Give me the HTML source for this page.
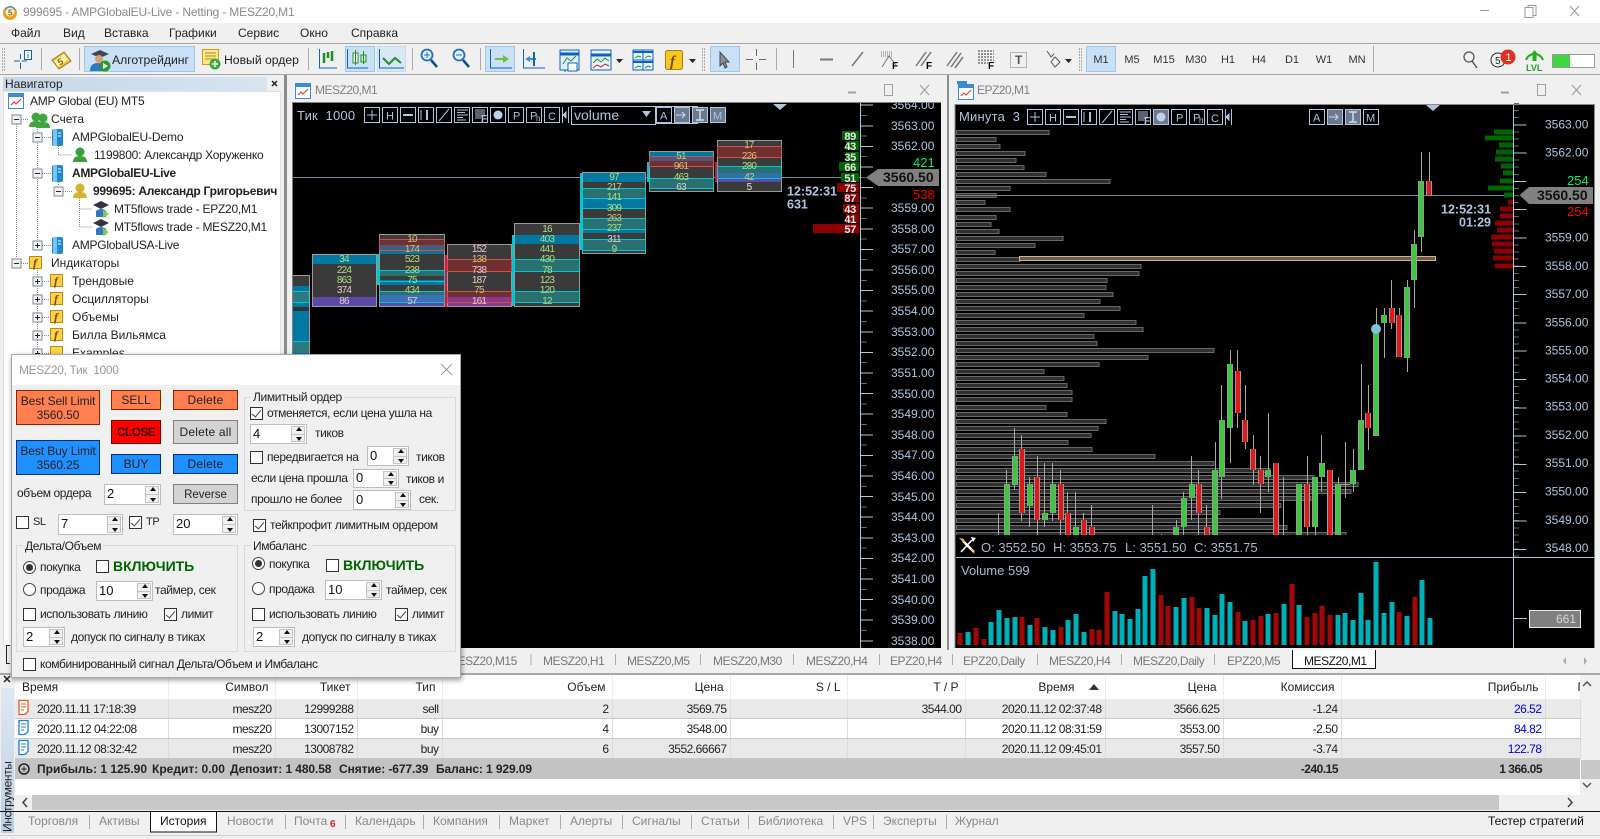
<!DOCTYPE html>
<html lang="ru"><head><meta charset="utf-8"><title>999695 - AMPGlobalEU-Live - Netting - MESZ20,M1</title>
<style>
html,body{margin:0;padding:0;width:1600px;height:839px;overflow:hidden;background:#f0f0f0;font:12px/16px "Liberation Sans","Noto Sans CJK SC",sans-serif;color:#222}
.a{position:absolute;white-space:nowrap}
.r{position:absolute}
#svg{position:absolute;left:0;top:0}
svg text{font-family:"Liberation Sans","Noto Sans CJK SC",sans-serif}
.tf{position:absolute;top:52px;width:30px;text-align:center;font-size:11px;color:#333}
.ct{color:#777;letter-spacing:-.45px}
.bt{color:#888}
.ls{letter-spacing:-.25px}
table{position:absolute;left:15px;top:675px;width:1565px;border-collapse:collapse;table-layout:fixed;background:#fff}
th,td{padding:0 3px 0 0;text-align:right;white-space:nowrap;overflow:hidden;font-weight:normal;border-right:1px solid #dcdcdc}
th{height:24px;padding-right:6px;border-right:1px solid #eee}
td{height:19px;border-bottom:1px solid #c8c8c8;letter-spacing:-.5px;line-height:14px}
tr.g td{background:#e9e9e9}
tr.s td{background:#c3c3c3;font-weight:bold;height:20px;border:0;font-size:12px}
.bl{color:#0000e0}
#dlg{position:absolute;left:11px;top:354px;width:450px;height:324px;background:#f0f0f0;border:1px solid #a8a8a8;box-sizing:border-box;box-shadow:1px 2px 5px rgba(0,0,0,.4)}
.w{position:absolute;left:0;top:0}
.w .a{letter-spacing:-.4px}
.b{position:absolute;box-sizing:border-box;display:flex;align-items:center;justify-content:center;text-align:center;line-height:14px;color:#222}
.sp{position:absolute;box-sizing:border-box;background:#fff;border:1px solid #bdbdbd;padding-left:2px;font-size:13px;line-height:17px;color:#111}
.sp:before{content:"";position:absolute;right:1px;top:1px;bottom:1px;width:12px;border:1px solid #c4c4c4;background:linear-gradient(#c4c4c4,#c4c4c4) 0 50%/100% 1px no-repeat #f0f0f0}
.sp i{position:absolute;right:4px;width:0;height:0;border:3px solid transparent}
.sp i.u{top:2px;border-bottom:4px solid #111;border-top:0}
.sp i.d{bottom:2px;border-top:4px solid #111;border-bottom:0}
.cb{position:absolute;box-sizing:border-box;width:13px;height:13px;background:#fff;border:1px solid #333}
.cb.c:after{content:"";position:absolute;left:3px;top:0;width:4px;height:8px;border:solid #444;border-width:0 1.5px 1.5px 0;transform:rotate(40deg)}
.ra{position:absolute;box-sizing:border-box;width:13px;height:13px;background:#fff;border:1px solid #444;border-radius:50%}
.ra.c:after{content:"";position:absolute;left:2px;top:2px;width:7px;height:7px;border-radius:50%;background:#333}
.g1{position:absolute;box-sizing:border-box;border:1px solid #dadada}
.lg{position:absolute;background:#f0f0f0;padding:0 2px;white-space:nowrap;letter-spacing:-.35px}
.vk{position:absolute;font-weight:bold;font-size:14px;color:#006400;white-space:nowrap;line-height:16px}
</style></head><body>

<!-- backgrounds -->
<div class="r" style="left:0;top:0;width:1600px;height:23px;background:#fff"></div>
<div class="r" style="left:0;top:43px;width:1600px;height:1px;background:#a6a6a6"></div>
<div class="r" style="left:0;top:74px;width:1600px;height:1px;background:#a6a6a6"></div>
<div class="r" style="left:84px;top:46px;width:111px;height:26px;box-sizing:border-box;background:#c9e0f7;border:1px solid #9cc7ea"></div>
<div class="r" style="left:345px;top:46px;width:30px;height:26px;box-sizing:border-box;background:#c9e0f7;border:1px solid #9cc7ea"></div>
<div class="r" style="left:377px;top:46px;width:29px;height:26px;box-sizing:border-box;background:#d9e8f6;border:1px solid #c4dcf0"></div>
<div class="r" style="left:485px;top:46px;width:30px;height:26px;box-sizing:border-box;background:#c9e0f7;border:1px solid #9cc7ea"></div>
<div class="r" style="left:710px;top:46px;width:30px;height:26px;box-sizing:border-box;background:#c9e0f7;border:1px solid #9cc7ea"></div>
<div class="r" style="left:1086px;top:46px;width:30px;height:26px;box-sizing:border-box;background:#c9e0f7;border:1px solid #9cc7ea"></div>
<!-- navigator -->
<div class="r" style="left:3px;top:77px;width:264px;height:14px;background:linear-gradient(90deg,#c6d7e8,#d8e4f0)"></div>
<div class="r" style="left:3px;top:91px;width:278px;height:555px;background:#fff;border:1px solid #e2e2e2;box-sizing:border-box"></div>
<div class="r" style="left:284px;top:75px;width:3px;height:598px;background:#8c8c8c"></div>
<div class="r" style="left:947px;top:75px;width:2px;height:575px;background:#8c8c8c"></div>
<div class="r" style="left:0;top:673px;width:1600px;height:2px;background:#a8a8a8"></div>
<!-- toolbox -->
<div class="r" style="left:15px;top:675px;width:1585px;height:120px;background:#fff"></div>
<div class="r" style="left:1px;top:688px;width:13px;height:145px;background:linear-gradient(#dfe8f2,#bccfe2)"></div>
<div class="r" style="left:15px;top:795px;width:1565px;height:15px;background:#f0f0f0"></div>
<div class="r" style="left:32px;top:795px;width:1467px;height:15px;background:#c8c8c8"></div>
<div class="r" style="left:1580px;top:675px;width:20px;height:135px;background:#f0f0f0"></div>
<div class="r" style="left:1580px;top:760px;width:20px;height:19px;background:#c8c8c8"></div>
<div class="r" style="left:0;top:811px;width:1600px;height:1px;background:#111"></div>
<div class="r" style="left:0;top:835px;width:1600px;height:1px;background:#cfcfcf"></div>

<svg id="svg" width="1600" height="839" viewBox="0 0 1600 839" xmlns="http://www.w3.org/2000/svg">
<defs>
<g id="m"><rect x="-4.5" y="-4.5" width="9" height="9" fill="#f2f2f2" stroke="#7f8a99"/><path d="M-2.5 0h5" stroke="#223"/></g>
<g id="p"><rect x="-4.5" y="-4.5" width="9" height="9" fill="#f2f2f2" stroke="#7f8a99"/><path d="M-2.5 0h5M0-2.5v5" stroke="#223"/></g>
<g id="srv"><rect x="0" y="0" width="11" height="17" rx="2" fill="#1e88d8"/><rect x="1" y="0" width="4" height="17" fill="#7cc4f4"/><path d="M6 4h3M6 7h3" stroke="#fff"/></g>
<g id="fi"><rect x=".5" y=".5" width="12" height="12" fill="#ffd24a" stroke="#b98a10"/></g>
<g id="hat"><path d="M7 0l8 4-8 4-8-4z" fill="#334" transform="translate(1 0)"/><path d="M3 10q5-4 10 0v6H3z" fill="#2f78c8"/><path d="M10 9l6 4-6 4z" fill="#7fce4a"/></g>
<g id="man"><circle cx="7" cy="5" r="4.5"/><path d="M0 15q0-6 7-6t7 6z"/></g>
<g id="win"><rect x=".5" y=".5" width="15" height="15" fill="#fff" stroke="#3a8ad8"/><rect x="0" y="0" width="16" height="4" fill="#3a8ad8"/><path d="M3 12l3-3 2 2 5-5" fill="none" stroke="#d83020"/></g>
<g id="tb" fill="none" stroke="#b0c4de" shape-rendering="crispEdges">
<path d="M.5.5h15v15H.5zM18.5.5h15v15h-15zM36.5.5h15v15h-15zM54.5.5h15v15h-15zM72.5.5h15v15h-15zM90.5.5h15v15h-15zM108.5.5h15v15h-15zM126.5.5h15v15h-15zM144.5.5h15v15h-15zM162.5.5h15v15h-15zM180.5.5h15v15h-15z"/>
<path d="M8 3v10M3 8h10M39 8h10M57 3v10M93 3h11M93 5.5h8M93 8h11M93 10.5h6M93 13h9M111 3h10M111 5h10M111 7h10M111 9h10M111 11h6"/>
<path d="M39 7.5h10M39 8.5h10M62.500 3v10M63.500 3v10" stroke-width="1"/>
<path d="M75 14L85 2" shape-rendering="auto"/>
<path d="M198.500 0v16M204.500 0v16"/>
<path d="M202 5l-3 3 3 3z" fill="#b0c4de"/>
</g>
<clipPath id="cp"><rect x="955" y="105" width="558" height="430"/></clipPath>
<clipPath id="lc"><rect x="293" y="103" width="647" height="545"/></clipPath>
<path id="gb" d="M1007 484V535M1015 456V485M1030 484V506M1045 513V520M1053 484V513M1076 527V535M1176 527V535M1184 498V527M1192 484V498M1215 470V535M1222 420V477M1230 364V428M1268 470V477M1299 484V535M1315 477V527M1322 463V477M1338 484V535M1353 470V484M1361 420V470M1376 329V436M1384 315V323M1407 287V358M1414 244V280M1421 181V237"/>
<path id="rb" d="M1022 449V513M1037 477V520M1061 484V520M1068 513V535M1084 520V535M1092 527V535M1199 484V513M1207 527V535M1238 371V413M1245 420V442M1253 449V470M1261 470V484M1276 463V535M1307 484V527M1330 470V535M1368 413V428M1392 308V323M1399 315V357M1429 181V195"/>
</defs>

<!-- title -->
<circle cx="10" cy="13" r="7" fill="#e8a020"/><path d="M4 10q6-8 12 0" fill="#4a90d0"/><circle cx="10" cy="12" r="4.500" fill="#f4f0d0"/>
<text x="8" y="15.500" font-size="8" font-weight="bold" fill="#b06000">5</text>
<text x="23" y="16" fill="#8a8a8a" font-size="12" letter-spacing="-.17">999695 - AMPGlobalEU-Live - Netting - MESZ20,M1</text>
<path d="M1480 10.500h9" stroke="#999"/>
<path d="M1525 7.500h8v10h-8zM1528 7.500v-2h8v10h-3" fill="none" stroke="#999"/>
<path d="M1570 6l9 10M1579 6l-9 10" stroke="#999" fill="none"/>

<!-- toolbar icons -->
<g shape-rendering="crispEdges" fill="none">
<path d="M2.500 48v24M4.500 48v24M702.500 48v24M704.500 48v24M1079.500 48v24M1081.500 48v24" stroke="#aaa" stroke-dasharray="2 1"/>
<path d="M41.500 48v22M79.500 48v22M308.500 48v22M412.500 48v22M480.500 48v22M776.500 48v22M1373.500 46v26" stroke="#aaa"/>
<path d="M14 61h6M22 61h5M20.500 54v5M20.500 63v6" stroke="#1060c0"/>
<rect x="24.500" y="50.500" width="7" height="9" fill="#fff" stroke="#1060c0"/><path d="M28 52v1M28 54v4" stroke="#1060c0"/>
</g>
<path d="M52 60l12-8 7 9-12 8z" fill="#e8c040" stroke="#a07818"/><path d="M54 61l10-7 4 6-10 7z" fill="#fff4b0"/>
<text x="58" y="65" font-size="9" font-weight="bold" fill="#a06000" transform="rotate(-30 60 62)">5</text>
<path d="M91 54l9-4 9 4-9 4z" fill="#445"/><circle cx="99" cy="59" r="4" fill="#d8a070"/><path d="M90 71q0-8 8-8t8 8z" fill="#2f78c8"/><circle cx="105" cy="66" r="5.500" fill="#2c9a2c"/><path d="M103 63l5 3-5 3z" fill="#fff"/>
<rect x="202.500" y="49.500" width="16" height="15" fill="#ffe88a" stroke="#c8a020"/><path d="M205 53h11M205 56h11M205 59h11" stroke="#b08820"/><circle cx="215" cy="64" r="5.500" fill="#40a840"/><path d="M212 64h6M215 61v6" stroke="#fff" stroke-width="1.500"/>
<g shape-rendering="crispEdges" fill="none" stroke="#1060c0">
<path d="M319.500 49v19H337M347.500 49v19H368M379.500 49v19H404M490.500 49v19H512M523.500 49v19H545M565 51v21"/>
</g>
<path d="M324 53v10M328 52v6M332 51v10" stroke="#209020" stroke-width="2.500" fill="none"/>
<rect x="353" y="53" width="5" height="10" fill="#fff" stroke="#209020"/><rect x="361" y="55" width="5" height="7" fill="#c8f0c8" stroke="#209020"/><path d="M355.500 50v15M363.500 51v13" stroke="#209020"/>
<path d="M383 58l6 6 6-6 6 5" fill="none" stroke="#209020" stroke-width="2"/>
<circle cx="427" cy="55" r="5.500" fill="#e6f2fc" stroke="#1a70c8" stroke-width="1.800"/><path d="M431 60l6 7" stroke="#1a4a90" stroke-width="2.500"/><path d="M424 55h6M427 52v6" stroke="#1a70c8"/>
<circle cx="459" cy="55" r="5.500" fill="#e6f2fc" stroke="#1a70c8" stroke-width="1.800"/><path d="M463 60l6 7" stroke="#1a4a90" stroke-width="2.500"/><path d="M456 55h6" stroke="#1a70c8"/>
<path d="M495 58h8v-3l6 4-6 4v-3h-8z" fill="#70c040"/>
<path d="M536 58h-6v-2l-5 3 5 3v-2h6z" fill="#3a90e0"/><rect x="533" y="52" width="2" height="14" fill="#1060c0"/>
<rect x="560" y="50" width="19" height="20" fill="#e0f0ff" stroke="#1060c0"/><path d="M560 54h19" stroke="#1060c0" stroke-width="3"/><path d="M563 64l4-6 4 3 5-5" stroke="#209020" fill="none"/><rect x="568" y="63" width="9" height="8" fill="#fff" stroke="#1060c0"/>
<rect x="591" y="50" width="20" height="20" fill="#e8f4ff" stroke="#1060c0"/><path d="M591 55h20" stroke="#1060c0" stroke-width="3"/><path d="M593 63l4-4 4 3 4-4 4 3" stroke="#209020" fill="none"/><path d="M593 68l4-3 4 2 4-3 4 2" stroke="#c03020" fill="none"/>
<path d="M616 59h7l-3.500 4z" fill="#222"/>
<rect x="633" y="50" width="20" height="20" fill="#e8f4ff" stroke="#1060c0"/><path d="M633 60h20M643 50v20" stroke="#1060c0"/><path d="M633 52h20M633 62h20" stroke="#1060c0" stroke-width="2"/><path d="M635 58l3-2 3 1M645 58l3-2 3 1M635 68l3-2 3 1M645 68l3-2 3 1" stroke="#209020" fill="none"/>
<rect x="665.500" y="50.500" width="17" height="19" rx="2" fill="#f8c820" stroke="#a88010"/>
<text x="670" y="66" font-size="15" font-style="italic" font-weight="bold" fill="#7a4a00" style="font-family:'Liberation Serif',serif">f</text>
<path d="M689 59h7l-3.500 4z" fill="#222"/>
<path d="M720 52l0 14 3-3 2 5 2-1-2-5h4z" fill="#8a9099" stroke="#444"/>
<path d="M746 59.500h7M759 59.500h7M756.500 49v7M756.500 63v7" stroke="#666" shape-rendering="crispEdges" fill="none"/>
<g stroke="#777" fill="none">
<path d="M793.500 50v18" stroke-width="1"/><path d="M820 59.500h13" stroke-width="2"/><path d="M852 66l11-14" stroke-width="1.500"/>
<path d="M881 52h12M881 54h12M881 56h12" stroke-dasharray="1 1"/><path d="M882 67l7-11 7 9"/>
<path d="M916 66l10-14M921 66l10-14" stroke-width="1.500"/><path d="M947 66l10-14M951 67l10-14M955 68l8-11" stroke-width="1.500"/>
<path d="M978 51h16M978 54h16M978 57h16M978 60h16M978 63h10" stroke-width="1.500" stroke-dasharray="2 1"/>
<rect x="1010.500" y="52.500" width="16" height="15" stroke-dasharray="1 1"/>
<path d="M1047 51l4 6 3-3M1055 57l5 5-5 5-4-5z" stroke="#555"/>
</g>
<text x="892" y="69" font-size="10" font-weight="bold">F</text><text x="926" y="69" font-size="10" font-weight="bold">F</text><text x="988" y="69" font-size="10" font-weight="bold">F</text>
<text x="1015" y="64" font-size="12" font-weight="bold" fill="#555">T</text>
<path d="M1065 59h7l-3.500 4z" fill="#222"/>
<circle cx="1469" cy="57" r="5" fill="none" stroke="#555" stroke-width="1.300"/><path d="M1472 61l5 7" stroke="#555" stroke-width="1.500"/>
<circle cx="1498" cy="60" r="7" fill="#f4f4f4" stroke="#222"/><text x="1495" y="64" font-size="10" fill="#222">5</text>
<circle cx="1508" cy="57" r="7.500" fill="#e03020"/><text x="1505.500" y="61" font-size="11" fill="#fff">1</text>
<path d="M1526 60a9 9 0 0 1 17 0" fill="none" stroke="#20b020" stroke-width="2"/><path d="M1534.500 50l4 5h-2v6h-4v-6h-2z" fill="#20b020"/>
<text x="1526" y="71" font-size="9" font-weight="bold" fill="#20a020">LVL</text>
<rect x="1552.500" y="54.500" width="42" height="13" fill="#fff" stroke="#999"/><rect x="1553" y="55" width="17" height="12" fill="#40d840"/>

<!-- navigator icons -->
<path d="M272 81l5 5M277 81l-5 5" stroke="#222" stroke-width="1.500"/>
<g fill="none" stroke="#888" stroke-dasharray="1 1" shape-rendering="crispEdges">
<path d="M16.500 124V258M37.500 127V245M58.500 142V155H72M58.500 178V186M79.500 198V227H92M79.500 209H92M21 119.500h7M42 137.500h9M42 173.500h9M42 245.500h9M63 191.500h9M21 263.500h7M37.500 270V354M42 281.500h7M42 299.500h7M42 317.500h7M42 335.500h7M42 353.500h7"/>
</g>
<use href="#win" x="8" y="93"/>
<use href="#m" x="16.500" y="119.500"/><use href="#m" x="37.500" y="137.500"/><use href="#m" x="37.500" y="173.500"/><use href="#p" x="37.500" y="245.500"/><use href="#m" x="58.500" y="191.500"/><use href="#m" x="16.500" y="263.500"/><use href="#p" x="37.500" y="281.500"/><use href="#p" x="37.500" y="299.500"/><use href="#p" x="37.500" y="317.500"/><use href="#p" x="37.500" y="335.500"/><use href="#p" x="37.500" y="353.500"/>
<g fill="#3fa63f"><use href="#man" x="29" y="112"/><use href="#man" x="36" y="113"/></g>
<use href="#srv" x="52" y="129"/><use href="#srv" x="52" y="165"/><use href="#srv" x="52" y="237"/>
<g fill="#38a038"><use href="#man" x="73" y="147"/></g>
<g fill="#d8b030"><use href="#man" x="73" y="183"/></g>
<use href="#hat" x="93" y="201"/><use href="#hat" x="93" y="219"/>
<use href="#fi" x="29" y="256"/><use href="#fi" x="50" y="274"/><use href="#fi" x="50" y="292"/><use href="#fi" x="50" y="310"/><use href="#fi" x="50" y="328"/><use href="#fi" x="50" y="346"/>
<g font-size="12" font-style="italic" font-weight="bold" fill="#7a4a00">
<text x="33" y="267" style="font-family:'Liberation Serif',serif">f</text><text x="54" y="285" style="font-family:'Liberation Serif',serif">f</text><text x="54" y="303" style="font-family:'Liberation Serif',serif">f</text><text x="54" y="321" style="font-family:'Liberation Serif',serif">f</text><text x="54" y="339" style="font-family:'Liberation Serif',serif">f</text></g>

<!-- window chrome -->
<use href="#win" x="295" y="83"/>
<text x="315" y="94" font-size="12" fill="#808080" letter-spacing="-.5">MESZ20,M1</text>
<g fill="none" stroke="#a0a0a0"><path d="M848 92.500h8" stroke-width="2"/><rect x="884.500" y="84.500" width="8" height="11"/><path d="M920 85l9 10M929 85l-9 10" stroke-width="1.200"/>
<path d="M1501 92.500h8" stroke-width="2"/><rect x="1537.500" y="84.500" width="8" height="11"/><path d="M1572 85l9 10M1581 85l-9 10" stroke-width="1.200"/></g>
<use href="#win" x="958" y="84"/><rect x="957" y="81" width="10" height="3" fill="#3a8ad8"/>
<text x="977" y="94" font-size="12" fill="#808080" letter-spacing="-.5">EPZ20,M1</text>

<!-- LEFT CHART -->
<rect x="292" y="102" width="649" height="546" fill="#000"/>
<path d="M292.500 102.500H941M292.500 102V648" stroke="#808080" fill="none" shape-rendering="crispEdges"/>
<g clip-path="url(#lc)">
<path d="M293 177.500H860" stroke="#778899" shape-rendering="crispEdges"/>
<g shape-rendering="crispEdges" stroke="none">
<rect x="377" y="254" width="3" height="31" fill="#00c8d0"/><rect x="445" y="255" width="3" height="52" fill="#e0103c"/><rect x="512" y="235" width="3" height="71" fill="#00c8d0"/><rect x="580" y="173" width="3" height="77" fill="#00c8d0"/><rect x="647" y="162" width="3" height="20" fill="#00c8d0"/><rect x="715" y="162" width="3" height="20" fill="#e0103c"/>
<rect x="293" y="275" width="17" height="80" fill="#3a3a3a"/><rect x="293" y="286" width="16" height="68" fill="#00789f"/><rect x="293" y="291" width="16" height="11" fill="#2a7a80"/><rect x="293" y="307" width="16" height="4" fill="#333"/><rect x="293" y="341" width="16" height="12" fill="#2a7a80"/>
<rect x="312" y="254" width="65" height="53" fill="#3a3a3a"/><rect x="312" y="254" width="65" height="10" fill="#00789f"/><rect x="312" y="297" width="65" height="10" fill="#5b48a8"/>
<rect x="379" y="234" width="66" height="73" fill="#3a3a3a"/><rect x="379" y="250" width="66" height="4" fill="#00789f"/><rect x="379" y="280" width="66" height="5" fill="#00789f"/><rect x="379" y="295" width="66" height="7" fill="#3c70b8"/><rect x="379" y="302" width="66" height="5" fill="#5b48a8"/><rect x="379" y="239" width="66" height="6" fill="#703030"/><rect x="379" y="245" width="66" height="5" fill="#4a5a7a"/><rect x="379" y="270" width="66" height="6" fill="#2a7070"/>
<rect x="379" y="291" width="66" height="4" fill="#2a7070"/>
<rect x="447" y="244" width="65" height="63" fill="#3a3a3a"/><rect x="447" y="259" width="65" height="12" fill="#703030"/><rect x="447" y="291" width="65" height="6" fill="#703030"/><rect x="447" y="297" width="65" height="10" fill="#8a3a8a"/>
<rect x="514" y="223" width="66" height="84" fill="#3a3a3a"/><rect x="514" y="235" width="66" height="9" fill="#00789f"/><rect x="514" y="259" width="66" height="12" fill="#2a7070"/><rect x="514" y="291" width="66" height="11" fill="#2a7070"/>
<rect x="582" y="172" width="64" height="82" fill="#3a3a3a"/><rect x="582" y="172" width="64" height="10" fill="#00789f"/><rect x="582" y="188" width="64" height="10" fill="#2a7070"/><rect x="582" y="198" width="64" height="10" fill="#00789f"/><rect x="582" y="218" width="64" height="11" fill="#2a7070"/><rect x="582" y="229" width="64" height="4" fill="#00789f"/><rect x="582" y="239" width="64" height="11" fill="#2a7070"/>
<rect x="649" y="151" width="65" height="41" fill="#3a3a3a"/><rect x="649" y="151" width="65" height="5" fill="#00789f"/><rect x="649" y="156" width="65" height="5" fill="#4a5a7a"/><rect x="649" y="161" width="65" height="5" fill="#703030"/><rect x="649" y="178" width="65" height="10" fill="#2a7070"/>
<rect x="717" y="140" width="65" height="52" fill="#3a3a3a"/><rect x="717" y="146" width="65" height="11" fill="#703030"/><rect x="717" y="166" width="65" height="7" fill="#2a7070"/><rect x="717" y="173" width="65" height="5" fill="#3070a8"/><rect x="717" y="178" width="65" height="4" fill="#5b48a8"/>
</g>
<g fill="none" stroke="#9a9a9a" shape-rendering="crispEdges"><path d="M293 275.500h16.500V355M312.500 254.500h64v52h-64zM379.500 234.500h65v72h-65zM447.500 244.500h64v62h-64zM514.500 223.500h65v83h-65zM582.500 172.500h63v81h-63zM649.500 151.500h64v40h-64zM717.500 140.500h64v51h-64z"/></g>
<g fill="none" stroke="#00c8d0" shape-rendering="crispEdges"><path d="M293 291.500h16v11h-16M293 341.500h16M379.500 270.500h65v11h-65zM379.500 291.500h65v11h-65zM514.500 259.500h65v12h-65zM514.500 291.500h65v11h-65zM582.500 188.500h63v10h-63zM582.500 198.500h63v10h-63zM582.500 218.500h63v11h-63zM582.500 239.500h63v11h-63zM649.500 178.500h64v10h-64zM717.500 166.500h64v12h-64z"/></g>
<g fill="none" stroke="#d05050" shape-rendering="crispEdges"><path d="M379.500 239.500h65v11h-65zM447.500 259.500h64v12h-64zM447.500 291.500h64v11h-64zM649.500 156.500h64v10h-64zM717.500 146.500h64v11h-64z"/></g>
<g font-size="10" text-anchor="middle" letter-spacing="-.8" fill="#b0dc80">
<text x="344" y="262">34</text><text x="344" y="273">224</text><text x="344" y="283">863</text><text x="344" y="293" fill="#e8c8d0">374</text><text x="344" y="304" fill="#e8c8d0">86</text>
<text x="412" y="242" fill="#d8c070">10</text><text x="412" y="252" fill="#d8c070">174</text><text x="412" y="262">523</text><text x="412" y="273">238</text><text x="412" y="283">75</text><text x="412" y="293">434</text><text x="412" y="304" fill="#e8c8d0">57</text>
<text x="479" y="252" fill="#e8c8d0">152</text><text x="479" y="262" fill="#d8c070">138</text><text x="479" y="273" fill="#e8c8d0">738</text><text x="479" y="283" fill="#e8c8d0">187</text><text x="479" y="293" fill="#d8c070">75</text><text x="479" y="304" fill="#e8c8d0">161</text>
<text x="547" y="232">16</text><text x="547" y="242">403</text><text x="547" y="252">441</text><text x="547" y="262">430</text><text x="547" y="273">78</text><text x="547" y="283">123</text><text x="547" y="293">120</text><text x="547" y="304">12</text>
<text x="614" y="180">97</text><text x="614" y="190">217</text><text x="614" y="200">141</text><text x="614" y="211">309</text><text x="614" y="221" fill="#d8c070">263</text><text x="614" y="231">237</text><text x="614" y="242" fill="#e8c8d0">311</text><text x="614" y="252">9</text>
<text x="681" y="159">51</text><text x="681" y="169" fill="#d8c070">961</text><text x="681" y="180">463</text><text x="681" y="190" fill="#e8c8d0">63</text>
<text x="749" y="148" fill="#d8c070">17</text><text x="749" y="159" fill="#d8c070">226</text><text x="749" y="169">280</text><text x="749" y="180">42</text><text x="749" y="190" fill="#e8e8e8">5</text>
</g>
<path d="M773 104h14l-7 6z" fill="#b0c4de"/>
<g shape-rendering="crispEdges" fill="none">
<line x1="860.500" y1="103" x2="860.500" y2="648" stroke="#b0c4de"/>
<line x1="866.500" y1="104.700" x2="866.500" y2="648" stroke="#b0c4de" stroke-width="13" stroke-dasharray="1 19.600"/>
<line x1="864" y1="115" x2="864" y2="648" stroke="#666" stroke-width="6" stroke-dasharray="1 19.600"/>
</g>
<g font-size="12" fill="#b0c4de">
<text x="891" y="109">3564.00</text><text x="891" y="130">3563.00</text><text x="891" y="150">3562.00</text><text x="891" y="212">3559.00</text><text x="891" y="233">3558.00</text><text x="891" y="253">3557.00</text><text x="891" y="274">3556.00</text><text x="891" y="294">3555.00</text><text x="891" y="315">3554.00</text><text x="891" y="336">3553.00</text><text x="891" y="356">3552.00</text><text x="891" y="377">3551.00</text><text x="891" y="398">3550.00</text><text x="891" y="418">3549.00</text><text x="891" y="439">3548.00</text><text x="891" y="459">3547.00</text><text x="891" y="480">3546.00</text><text x="891" y="501">3545.00</text><text x="891" y="521">3544.00</text><text x="891" y="542">3543.00</text><text x="891" y="562">3542.00</text><text x="891" y="583">3541.00</text><text x="891" y="604">3540.00</text><text x="891" y="624">3539.00</text><text x="891" y="645">3538.00</text>
</g>
<g shape-rendering="crispEdges"><path d="M842 131h17v9h-17zM846 141h13v9h-13zM846 152h13v9h-13zM839 162h20v9h-20zM841 173h18v9h-18z" fill="#006400"/><path d="M837 183h22v9h-22zM844 193h15v9h-15zM843 204h16v9h-16zM846 214h13v9h-13zM813 224h46v9h-46z" fill="#8b0000"/></g>
<g font-size="11" font-weight="bold" fill="#e8e8e8" text-anchor="end" letter-spacing="-.3"><text x="856" y="140">89</text><text x="856" y="150">43</text><text x="856" y="161">35</text><text x="856" y="171">66</text><text x="856" y="182">51</text><text x="856" y="192">75</text><text x="856" y="202">87</text><text x="856" y="213">43</text><text x="856" y="223">41</text><text x="856" y="233">57</text></g>
<text x="913" y="167" font-size="13" fill="#00f070">421</text><text x="913" y="199" font-size="13" fill="#ff0000">538</text>
<path d="M866 177.500L878 169H939V186H878z" fill="#808080"/>
<text x="883" y="182" font-size="14" font-weight="bold" fill="#111">3560.50</text>
<g font-size="12.500" font-weight="bold" fill="#b0c4de"><text x="787" y="195.500">12:52:31</text><text x="787" y="208.500">631</text></g>
<text x="297" y="120" font-size="13" fill="#b0c4de" letter-spacing=".2">Тик&#160; 1000</text>
<use href="#tb" x="364" y="107"/>
<circle cx="498" cy="115" r="4.500" fill="#c0d0e8"/>
<g font-size="11" fill="#b0c4de"><text x="386" y="119.500">H</text><text x="513" y="119.500">P</text><text x="530" y="119.500">P</text><text x="536" y="121" font-size="8">h</text><text x="548" y="120">C</text><text x="481" y="122" font-size="10" font-weight="bold">F</text></g>
<rect x="571.500" y="106.500" width="84" height="18" fill="#000" stroke="#b0c4de"/>
<text x="574" y="120" font-size="14" fill="#b0c4de">volume</text><path d="M642 111h9l-4.500 6z" fill="#b0c4de"/>
<g shape-rendering="crispEdges"><rect x="656.500" y="106.500" width="41" height="17" fill="none" stroke="#b0c4de"/><rect x="656.500" y="107.500" width="15" height="15" fill="#000" stroke="#b0c4de"/><rect x="674.500" y="107.500" width="15" height="15" fill="#6a7a90" stroke="#b0c4de"/><rect x="692.500" y="107.500" width="15" height="15" fill="#6a7a90" stroke="#b0c4de"/><rect x="710.500" y="107.500" width="15" height="15" fill="#6a7a90" stroke="#b0c4de"/></g>
<text x="660" y="119.500" font-size="11" fill="#b0c4de">A</text><path d="M676 115h9M682 112l3 3-3 3" stroke="#d0dcea" fill="none"/><path d="M696 110h8M700 110v10M696 120h8" stroke="#d0dcea" fill="none" stroke-width="1.500"/><text x="713" y="119.500" font-size="11" fill="#b0c4de">M</text>
</g>

<!-- RIGHT CHART -->
<rect x="955" y="105" width="639" height="543" fill="#000"/>
<path d="M955 104.500H1594.500V648M955 104V648" stroke="#8a8a8a" fill="none" shape-rendering="crispEdges"/>
<g clip-path="url(#cp)">
<path shape-rendering="crispEdges" fill="#303030" stroke="#686868" d="M956.500 130.500H1049v4H956.500zM956.500 137.500H996v4H956.500zM956.500 144.500H1000v4H956.500zM956.500 151.500H1025v4H956.500zM956.500 158.500H1016v4H956.500zM956.500 165.500H1024v4H956.500zM956.500 172.500H1046v4H956.500zM956.500 179.500H1110v4H956.500zM956.500 186.500H1010v4H956.500zM956.500 193.500H996v4H956.500zM956.500 200.500H985v4H956.500zM956.500 207.500H1010v4H956.500zM956.500 215.500H996v4H956.500zM956.500 222.500H991v4H956.500zM956.500 229.500H999v4H956.500zM956.500 236.500H1063v4H956.500zM956.500 243.500H1035v4H956.500zM956.500 250.500H995v4H956.500zM956.500 257.500H1020v4H956.500zM956.500 264.500H1141v4H956.500zM956.500 271.500H1139v4H956.500zM956.500 278.500H1107v4H956.500zM956.500 285.500H1106v4H956.500zM956.500 292.500H1113v4H956.500zM956.500 299.500H1100v4H956.500zM956.500 306.500H1120v4H956.500zM956.500 313.500H1084v4H956.500zM956.500 320.500H1136v4H956.500zM956.500 327.500H1143v4H956.500zM956.500 334.500H1094v4H956.500zM956.500 341.500H1097v4H956.500zM956.500 348.500H1214v4H956.500zM956.500 355.500H1148v4H956.500zM956.500 362.500H1099v4H956.500zM956.500 369.500H1044v4H956.500zM956.500 376.500H1064v4H956.500zM956.500 383.500H1067v4H956.500zM956.500 390.500H1072v4H956.500zM956.500 397.500H1072v4H956.500zM956.500 405.500H1046v4H956.500zM956.500 412.500H1067v4H956.500zM956.500 419.500H1106v4H956.500zM956.500 426.500H1098v4H956.500zM956.500 433.500H1091v4H956.500zM956.500 440.500H1068v4H956.500zM956.500 447.500H1092v4H956.500zM956.500 454.500H1155v4H956.500zM956.500 461.500H1214v4H956.500zM956.500 468.500H1270v4H956.500zM956.500 475.500H1314v4H956.500zM956.500 482.500H1358v4H956.500zM956.500 489.500H1351v4H956.500zM956.500 496.500H1311v4H956.500zM956.500 503.500H1281v4H956.500zM956.500 510.500H1220v4H956.500zM956.500 518.500H1274v4H956.500zM956.500 525.500H1287v4H956.500zM956.500 532.500H1346v4H956.500z"/>
<rect x="1019.500" y="256.500" width="416" height="4" fill="#6a5a48" stroke="#d2b48c" shape-rendering="crispEdges"/>
<path d="M956 195.500H1513" stroke="#778899" shape-rendering="crispEdges"/>
<path stroke="#a8a8a8" fill="none" shape-rendering="crispEdges" d="M998.500 513V535M1006.500 470V535M1014.500 428V490M1021.500 435V521M1029.500 477V527M1037.500 456V535M1044.500 463V527M1052.500 463V521M1060.500 470V535M1067.500 492V535M1075.500 492V535M1083.500 513V535M1091.500 505V535M1152.500 505V535M1161.500 534V535M1176.500 520V535M1183.500 492V535M1191.500 456V520M1198.500 470V535M1206.500 505V535M1215.500 442V535M1221.500 385V499M1230.500 350V463M1237.500 350V428M1245.500 385V449M1253.500 435V485M1260.500 456V513M1268.500 413V492M1275.500 463V535M1283.500 477V535M1299.500 484V535M1307.500 456V535M1315.500 477V535M1321.500 435V492M1330.500 470V535M1338.500 477V535M1345.500 442V498M1341 484.500H1350M1353.500 449V492M1361.500 364V470M1368.500 385V450M1376.500 308V436M1384.500 308V358M1391.500 280V329M1399.500 308V357M1407.500 280V372M1414.500 230V308M1421.500 152V252M1429.500 152V195"/>
<g shape-rendering="crispEdges" fill="none">
<use href="#gb" stroke="#999" stroke-width="6"/><use href="#rb" stroke="#999" stroke-width="6"/>
<use href="#gb" stroke="#3cc83c" stroke-width="4"/><use href="#rb" stroke="#e01818" stroke-width="4"/>
</g>
<circle cx="1376" cy="329" r="5" fill="#7cc7d6"/>
<path d="M1426 105h14l-7 6z" fill="#b0c4de"/>
</g>
<rect x="956" y="535" width="557" height="22" fill="#000"/>
<path d="M963 541l11 11" stroke="#fff" stroke-width="2.500"/><path d="M961 552l11-12" stroke="#fff" stroke-width="1.500"/><path d="M959 538l5 1 1 5zM970 549l5 5-2-5z" fill="#e8c040"/><path d="M971 537l5 1-3 4z" fill="#fff"/>
<g font-size="13" fill="#a8b8cc"><text x="981" y="552">O: 3552.50</text><text x="1053" y="552">H: 3553.75</text><text x="1125" y="552">L: 3551.50</text><text x="1194" y="552">C: 3551.75</text></g>
<path d="M956 557.500H1594" stroke="#b0c4de" shape-rendering="crispEdges"/>
<text x="961" y="575" font-size="13" fill="#a8b8cc">Volume 599</text>
<path fill="none" stroke="#00b0b8" stroke-width="5" shape-rendering="crispEdges" d="M968 645V632M991 645V622M999 645V610M1007 645V618M1015 645V617M1030 645V625M1045 645V627M1053 645V630M1068 645V620M1076 645V614M1084 645V632M1115 645V611M1122 645V614M1130 645V619M1138 645V609M1145 645V576M1153 645V569M1176 645V607M1184 645V598M1207 645V608M1215 645V615M1222 645V594M1230 645V602M1245 645V621M1268 645V614M1284 645V604M1299 645V605M1338 645V615M1345 645V613M1353 645V620M1361 645V593M1368 645V620M1376 645V562M1384 645V613M1392 645V602M1407 645V616M1422 645V580M1430 645V618"/>
<path fill="none" stroke="#a00808" stroke-width="5" shape-rendering="crispEdges" d="M960 645V633M976 645V628M984 645V639M1022 645V617M1037 645V618M1061 645V627M1092 645V629M1099 645V630M1107 645V592M1161 645V595M1168 645V606M1192 645V597M1199 645V608M1238 645V612M1253 645V620M1261 645V616M1276 645V613M1292 645V584M1307 645V617M1315 645V613M1322 645V606M1330 645V615M1399 645V612M1415 645V597"/>
<g shape-rendering="crispEdges" fill="none">
<line x1="1513.500" y1="105" x2="1513.500" y2="648" stroke="#b0c4de"/>
<line x1="1516.500" y1="103.100" x2="1516.500" y2="557" stroke="#666" stroke-width="5" stroke-dasharray="1 6.070"/>
<line x1="1520" y1="124.300" x2="1520" y2="557" stroke="#b0c4de" stroke-width="13" stroke-dasharray="1 27.300"/>
<path d="M1513 618.500h14" stroke="#b0c4de"/>
</g>
<g font-size="12" fill="#b0c4de"><text x="1545" y="128.500">3563.00</text><text x="1545" y="156.500">3562.00</text><text x="1545" y="241.500">3559.00</text><text x="1545" y="270">3558.00</text><text x="1545" y="298">3557.00</text><text x="1545" y="326.500">3556.00</text><text x="1545" y="354.500">3555.00</text><text x="1545" y="382.500">3554.00</text><text x="1545" y="410.500">3553.00</text><text x="1545" y="439">3552.00</text><text x="1545" y="467">3551.00</text><text x="1545" y="495.500">3550.00</text><text x="1545" y="524">3549.00</text><text x="1545" y="552">3548.00</text></g>
<rect x="1529.500" y="610.500" width="51" height="17" fill="#808080" stroke="#e8e8e8"/><text x="1576" y="623" font-size="12" fill="#d8d8d8" text-anchor="end">661</text>
<g fill="none" stroke-width="5" shape-rendering="crispEdges">
<path stroke="#006400" d="M1494 132H1513M1485 138H1513M1499 145H1513M1496 152H1513M1495 159H1513M1501 166H1513M1503 173H1513M1500 181H1513M1488 188H1513M1504 195H1513"/>
<path stroke="#8b0000" d="M1508 202H1513M1500 209H1513M1500 216H1513M1495 223H1513M1497 230H1513M1491 237H1513M1492 244H1513M1494 251H1513M1493 258H1513M1495 266H1513"/>
</g>
<text x="1567" y="185" font-size="13" fill="#00f070">254</text><text x="1567" y="216" font-size="13" fill="#ff0000">254</text>
<path d="M1519.500 195L1529 187H1593V204H1529z" fill="#808080"/>
<text x="1537" y="200" font-size="14" font-weight="bold" fill="#111">3560.50</text>
<g font-size="12.500" font-weight="bold" fill="#b0c4de"><text x="1441" y="213.500">12:52:31</text><text x="1491" y="226.500" text-anchor="end">01:29</text></g>
<text x="959" y="121" font-size="13" fill="#b0c4de" letter-spacing=".2">Минута&#160; 3</text>
<rect x="1153.500" y="109.500" width="15" height="15" fill="#6a7a90"/>
<use href="#tb" x="1027" y="109"/>
<circle cx="1161" cy="117" r="4.500" fill="#c0d0e8"/>
<g font-size="11" fill="#b0c4de"><text x="1049" y="121.500">H</text><text x="1176" y="121.500">P</text><text x="1193" y="121.500">P</text><text x="1199" y="123" font-size="8">h</text><text x="1211" y="122">C</text><text x="1144" y="124" font-size="10" font-weight="bold">F</text></g>
<g shape-rendering="crispEdges"><rect x="1309.500" y="109.500" width="15" height="15" fill="#000" stroke="#b0c4de"/><rect x="1327.500" y="109.500" width="15" height="15" fill="#6a7a90" stroke="#b0c4de"/><rect x="1345.500" y="109.500" width="15" height="15" fill="#6a7a90" stroke="#b0c4de"/><rect x="1363.500" y="109.500" width="15" height="15" fill="#000" stroke="#b0c4de"/></g>
<text x="1313" y="121.500" font-size="11" fill="#b0c4de">A</text><path d="M1329 117h9M1335 114l3 3-3 3" stroke="#d0dcea" fill="none"/><path d="M1349 112h8M1353 112v10M1349 122h8" stroke="#d0dcea" fill="none" stroke-width="1.500"/><text x="1366" y="121.500" font-size="11" fill="#b0c4de">M</text>

<!-- chart tabs separators -->
<path d="M531 654v11M615.500 654v11M700.500 654v11M793.500 654v11M879.500 654v11M952.500 654v11M1037.500 654v11M1121.500 654v11M1214.500 654v11" stroke="#aaa" shape-rendering="crispEdges"/>
<path d="M1566 657l-3 4 3 4z" fill="#aaa"/><path d="M1584 657l3 4-3 4z" fill="#aaa"/>
<path d="M1292.500 650V668.500H1375.500V650" fill="#fff" stroke="#111" shape-rendering="crispEdges"/>
<!-- toolbox icons -->
<path d="M4 676l6 6M10 676l-6 6" stroke="#222" stroke-width="1.500"/>
<path d="M27 798l-4 4.500 4 4.500" stroke="#444" fill="none" stroke-width="1.500"/>
<path d="M1568 798l4 4.500-4 4.500" stroke="#444" fill="none" stroke-width="1.500"/>
<path d="M1583 686l4-4 4 4M1583 783l4 4 4-4" stroke="#555" fill="none" stroke-width="1.500"/>
<!-- bottom tabs -->
<path d="M150.500 832V811.500H216.500V832Z" fill="#fff" stroke="#111" shape-rendering="crispEdges"/>
<path d="M89.500 815v14M285.500 815v14M345.500 815v14M423.500 815v14M499.500 815v14M560.500 815v14M622.500 815v14M691.500 815v14M748.500 815v14M833.500 815v14M873.500 815v14M946.500 815v14" stroke="#aaa" shape-rendering="crispEdges"/>
<path d="M10 645.500H6.500V663.500H10" stroke="#222" fill="none" shape-rendering="crispEdges"/>
<text transform="translate(11.500 832) rotate(-90)" font-size="12" fill="#222" letter-spacing="-.4">Инструменты</text>
</svg>

<!-- menu -->
<div class="a" style="left:11px;top:25px">Файл</div><div class="a" style="left:63px;top:25px">Вид</div><div class="a" style="left:104px;top:25px">Вставка</div><div class="a" style="left:169px;top:25px">Графики</div><div class="a" style="left:238px;top:25px">Сервис</div><div class="a" style="left:300px;top:25px">Окно</div><div class="a" style="left:351px;top:25px">Справка</div>
<!-- toolbar labels -->
<div class="a" style="left:112px;top:52px;font-size:12.2px">Алготрейдинг</div><div class="a" style="left:224px;top:52px;font-size:12.2px">Новый ордер</div>
<div class="tf" style="left:1086px">M1</div><div class="tf" style="left:1117px">M5</div><div class="tf" style="left:1149px">M15</div><div class="tf" style="left:1181px">M30</div><div class="tf" style="left:1213px">H1</div><div class="tf" style="left:1244px">H4</div><div class="tf" style="left:1277px">D1</div><div class="tf" style="left:1309px">W1</div><div class="tf" style="left:1342px">MN</div>
<!-- navigator -->
<div class="a" style="left:5px;top:76px">Навигатор</div>
<div class="a ls" style="left:30px;top:93px">AMP Global (EU) MT5</div>
<div class="a" style="left:51px;top:111px">Счета</div>
<div class="a" style="left:72px;top:129px;letter-spacing:-.12px">AMPGlobalEU-Demo</div>
<div class="a ls" style="left:94px;top:147px">1199800: Александр Хоруженко</div>
<div class="a ls" style="left:72px;top:165px;font-weight:bold;letter-spacing:-.3px">AMPGlobalEU-Live</div>
<div class="a ls" style="left:93px;top:183px;font-weight:bold;width:187px;overflow:hidden">999695: Александр Григорьевич</div>
<div class="a ls" style="left:114px;top:201px">MT5flows trade - EPZ20,M1</div>
<div class="a ls" style="left:114px;top:219px">MT5flows trade - MESZ20,M1</div>
<div class="a ls" style="left:72px;top:237px">AMPGlobalUSA-Live</div>
<div class="a" style="left:51px;top:255px">Индикаторы</div>
<div class="a" style="left:72px;top:273px">Трендовые</div>
<div class="a" style="left:72px;top:291px">Осцилляторы</div>
<div class="a" style="left:72px;top:309px">Объемы</div>
<div class="a" style="left:72px;top:327px">Билла Вильямса</div>
<div class="a" style="left:72px;top:345px">Examples</div>
<!-- chart tabs -->
<div class="a ct" style="left:448px;top:653px">MESZ20,M15</div><div class="a ct" style="left:543px;top:653px">MESZ20,H1</div><div class="a ct" style="left:627px;top:653px">MESZ20,M5</div><div class="a ct" style="left:713px;top:653px">MESZ20,M30</div><div class="a ct" style="left:806px;top:653px">MESZ20,H4</div><div class="a ct" style="left:890px;top:653px">EPZ20,H4</div><div class="a ct" style="left:963px;top:653px">EPZ20,Daily</div><div class="a ct" style="left:1049px;top:653px">MESZ20,H4</div><div class="a ct" style="left:1133px;top:653px">MESZ20,Daily</div><div class="a ct" style="left:1227px;top:653px">EPZ20,M5</div><div class="a ct" style="left:1304px;top:653px;color:#111">MESZ20,M1</div>
<!-- table -->
<table><colgroup><col style="width:153px"><col style="width:107px"><col style="width:82px"><col style="width:85px"><col style="width:170px"><col style="width:118px"><col style="width:117px"><col style="width:118px"><col style="width:140px"><col style="width:118px"><col style="width:118px"><col style="width:204px"><col style="width:35px"></colgroup>
<tr><th style="text-align:left;padding-left:7px">Время</th><th>Символ</th><th>Тикет</th><th>Тип</th><th>Объем</th><th>Цена</th><th>S / L</th><th>T / P</th><th style="padding-right:30px">Время</th><th>Цена</th><th>Комиссия</th><th>Прибыль</th><th style="text-align:left;padding-left:32px">П</th></tr>
<tr class="g"><td style="text-align:left;padding-left:22px">2020.11.11 17:18:39</td><td>mesz20</td><td>12999288</td><td>sell</td><td>2</td><td>3569.75</td><td></td><td>3544.00</td><td>2020.11.12 02:37:48</td><td>3566.625</td><td>-1.24</td><td class="bl">26.52</td><td></td></tr>
<tr><td style="text-align:left;padding-left:22px">2020.11.12 04:22:08</td><td>mesz20</td><td>13007152</td><td>buy</td><td>4</td><td>3548.00</td><td></td><td></td><td>2020.11.12 08:31:59</td><td>3553.00</td><td>-2.50</td><td class="bl">84.82</td><td></td></tr>
<tr class="g"><td style="text-align:left;padding-left:22px">2020.11.12 08:32:42</td><td>mesz20</td><td>13008782</td><td>buy</td><td>6</td><td>3552.66667</td><td></td><td></td><td>2020.11.12 09:45:01</td><td>3557.50</td><td>-3.74</td><td class="bl">122.78</td><td></td></tr>
<tr class="s"><td colspan="10"></td><td>-240.15</td><td>1 366.05</td><td></td></tr>
</table>
<svg style="position:absolute;left:0;top:0;pointer-events:none" width="1600" height="839"><circle cx="24" cy="769" r="5" fill="none" stroke="#222" stroke-width="1.500"/><path d="M21.500 769h5M24 766.500v5" stroke="#222"/><g fill="#fff" stroke-width="1.300"><path d="M19 700.500h9v11l-3 3h-6z" stroke="#e85a20"/><path d="M19 720.500h9v11l-3 3h-6z" stroke="#2080d0"/><path d="M19 740.500h9v11l-3 3h-6z" stroke="#2080d0"/></g><path d="M21 704h5M21 707h5M21 710h3" stroke="#e85a20"/><path d="M21 724h5M21 727h5M21 730h3M21 744h5M21 747h5M21 750h3" stroke="#2080d0"/><path d="M1089 690h10l-5-6z" fill="#333"/></svg>
<div class="a" style="left:37px;top:761px;font-weight:bold">Прибыль: 1 125.90</div><div class="a" style="left:152px;top:761px;font-weight:bold">Кредит: 0.00</div><div class="a" style="left:230px;top:761px;font-weight:bold;letter-spacing:-.1px">Депозит: 1 480.58</div><div class="a" style="left:339px;top:761px;font-weight:bold;letter-spacing:-.1px">Снятие: -677.39</div><div class="a" style="left:436px;top:761px;font-weight:bold;letter-spacing:-.1px">Баланс: 1 929.09</div>
<!-- bottom tabs -->
<div class="a bt" style="left:28px;top:813px">Торговля</div><div class="a bt" style="left:99px;top:813px">Активы</div><div class="a" style="left:160px;top:813px;color:#111">История</div><div class="a bt" style="left:227px;top:813px">Новости</div><div class="a bt" style="left:294px;top:813px">Почта</div><div class="a" style="left:330px;top:817px;color:#e02020;font-size:10px;font-weight:bold">6</div><div class="a bt" style="left:355px;top:813px">Календарь</div><div class="a bt" style="left:433px;top:813px">Компания</div><div class="a bt" style="left:509px;top:813px">Маркет</div><div class="a bt" style="left:570px;top:813px">Алерты</div><div class="a bt" style="left:632px;top:813px">Сигналы</div><div class="a bt" style="left:701px;top:813px">Статьи</div><div class="a bt" style="left:758px;top:813px">Библиотека</div><div class="a bt" style="left:843px;top:813px">VPS</div><div class="a bt" style="left:883px;top:813px">Эксперты</div><div class="a bt" style="left:955px;top:813px">Журнал</div><div class="a" style="left:1488px;top:813px;color:#111">Тестер стратегий</div>

<!-- DIALOG -->
<div id="dlg"><div class="r" style="left:0;top:0;width:448px;height:30px;background:#fff"></div></div>
<div class="w" style="position:absolute;left:0;top:0;width:1600px;height:839px;pointer-events:none">
<div class="a" style="left:19px;top:362px;color:#9a9a9a;letter-spacing:-.35px">MESZ20, Тик&nbsp; 1000</div>
<svg style="position:absolute;left:440px;top:363px" width="14" height="14"><path d="M1 1l11 11M12 1l-11 11" stroke="#999"/></svg>
<div class="b" style="left:16px;top:390px;width:84px;height:35px;background:#ff7f50;border:1px solid #8b2500;letter-spacing:-.1px">Best Sell Limit<br>3560.50</div>
<div class="b" style="left:111px;top:390px;width:50px;height:20px;background:#ff7f50;border:1px solid #8b2500">SELL</div>
<div class="b" style="left:173px;top:390px;width:65px;height:20px;background:#ff7f50;border:1px solid #8b2500;letter-spacing:.2px">Delete</div>
<div class="b" style="left:111px;top:420px;width:50px;height:24px;background:#ff0000;border:1px solid #800000;font-weight:bold;font-size:12px;letter-spacing:-.6px;color:#300">CLOSE</div>
<div class="b" style="left:173px;top:420px;width:65px;height:24px;background:#d3d3d3;border:1px solid #808080;letter-spacing:.2px">Delete all</div>
<div class="b" style="left:16px;top:440px;width:84px;height:35px;background:#1e90ff;border:1px solid #00307a;letter-spacing:-.1px">Best Buy Limit<br>3560.25</div>
<div class="b" style="left:111px;top:454px;width:50px;height:20px;background:#1e90ff;border:1px solid #00307a">BUY</div>
<div class="b" style="left:173px;top:454px;width:65px;height:20px;background:#1e90ff;border:1px solid #00307a;letter-spacing:.2px">Delete</div>
<div class="b" style="left:173px;top:484px;width:65px;height:20px;padding-top:2px;background:#d3d3d3;border:1px solid #808080;font-size:11.500px">Reverse</div>
<div class="a" style="left:17px;top:485px">объем ордера</div>
<div class="sp" style="left:104px;top:484px;width:57px;height:21px">2<i class="u"></i><i class="d"></i></div>
<div class="cb" style="left:16px;top:516px"></div><div class="a" style="left:33px;top:514px;font-size:11px">SL</div>
<div class="sp" style="left:58px;top:514px;width:65px;height:21px">7<i class="u"></i><i class="d"></i></div>
<div class="cb c" style="left:129px;top:516px"></div><div class="a" style="left:146px;top:514px;font-size:11px">TP</div>
<div class="sp" style="left:173px;top:514px;width:65px;height:21px">20<i class="u"></i><i class="d"></i></div>

<div class="g1" style="left:16px;top:545px;width:222px;height:107px"></div><div class="lg" style="left:23px;top:538px">Дельта/Объем</div>
<div class="ra c" style="left:23px;top:561px"></div><div class="a" style="left:40px;top:559px">покупка</div>
<div class="cb" style="left:96px;top:560px"></div><div class="vk" style="left:113px;top:558px">ВКЛЮЧИТЬ</div>
<div class="ra" style="left:23px;top:583px"></div><div class="a" style="left:40px;top:582px">продажа</div>
<div class="sp" style="left:96px;top:581px;width:57px;height:20px">10<i class="u"></i><i class="d"></i></div><div class="a" style="left:155px;top:582px">таймер, сек</div>
<div class="cb" style="left:23px;top:608px"></div><div class="a" style="left:40px;top:606px">использовать линию</div>
<div class="cb c" style="left:164px;top:608px"></div><div class="a" style="left:181px;top:606px">лимит</div>
<div class="sp" style="left:23px;top:627px;width:42px;height:20px">2<i class="u"></i><i class="d"></i></div><div class="a" style="left:71px;top:629px">допуск по сигналу в тиках</div>

<div class="g1" style="left:244px;top:397px;width:212px;height:114px"></div><div class="lg" style="left:251px;top:389px">Лимитный ордер</div>
<div class="cb c" style="left:250px;top:407px"></div><div class="a" style="left:267px;top:405px">отменяется, если цена ушла на</div>
<div class="sp" style="left:250px;top:424px;width:57px;height:20px">4<i class="u"></i><i class="d"></i></div><div class="a" style="left:315px;top:425px">тиков</div>
<div class="cb" style="left:250px;top:451px"></div><div class="a" style="left:267px;top:449px">передвигается на</div>
<div class="sp" style="left:367px;top:446px;width:42px;height:20px">0<i class="u"></i><i class="d"></i></div><div class="a" style="left:416px;top:449px">тиков</div>
<div class="a" style="left:251px;top:470px">если цена прошла</div>
<div class="sp" style="left:353px;top:469px;width:46px;height:19px;line-height:15px">0<i class="u"></i><i class="d"></i></div><div class="a" style="left:406px;top:471px">тиков и</div>
<div class="a" style="left:251px;top:491px">прошло не более</div>
<div class="sp" style="left:353px;top:490px;width:58px;height:20px">0<i class="u"></i><i class="d"></i></div><div class="a" style="left:419px;top:491px">сек.</div>
<div class="cb c" style="left:253px;top:519px"></div><div class="a" style="left:270px;top:517px">тейкпрофит лимитным ордером</div>

<div class="g1" style="left:244px;top:545px;width:212px;height:107px"></div><div class="lg" style="left:251px;top:538px">Имбаланс</div>
<div class="ra c" style="left:252px;top:557px"></div><div class="a" style="left:269px;top:556px">покупка</div>
<div class="cb" style="left:326px;top:559px"></div><div class="vk" style="left:343px;top:557px">ВКЛЮЧИТЬ</div>
<div class="ra" style="left:252px;top:582px"></div><div class="a" style="left:269px;top:581px">продажа</div>
<div class="sp" style="left:325px;top:580px;width:57px;height:20px">10<i class="u"></i><i class="d"></i></div><div class="a" style="left:386px;top:582px">таймер, сек</div>
<div class="cb" style="left:252px;top:608px"></div><div class="a" style="left:269px;top:606px">использовать линию</div>
<div class="cb c" style="left:395px;top:608px"></div><div class="a" style="left:412px;top:606px">лимит</div>
<div class="sp" style="left:253px;top:627px;width:42px;height:20px">2<i class="u"></i><i class="d"></i></div><div class="a" style="left:302px;top:629px">допуск по сигналу в тиках</div>
<div class="cb" style="left:23px;top:658px"></div><div class="a" style="left:40px;top:656px">комбинированный сигнал Дельта/Объем и Имбаланс</div>
</div>
</body></html>
